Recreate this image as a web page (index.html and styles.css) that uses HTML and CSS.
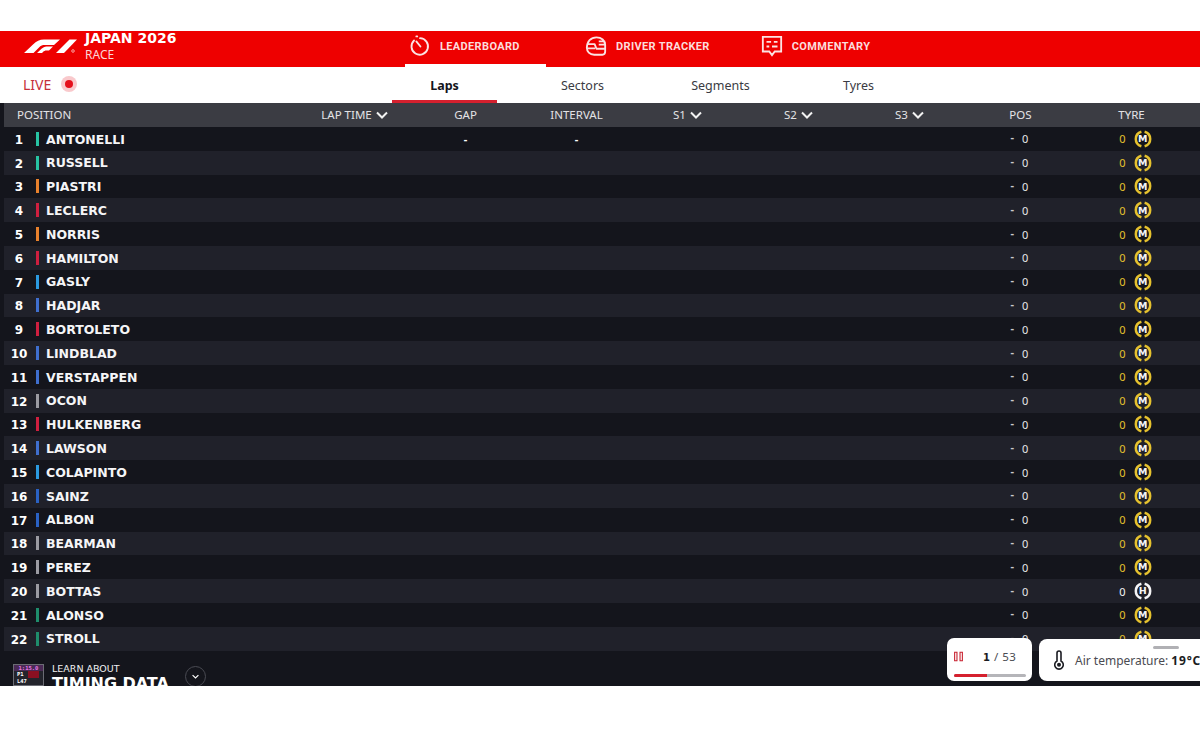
FILE: index.html
```html
<!DOCTYPE html>
<html lang="en">
<head>
<meta charset="utf-8">
<title>F1 Live Timing</title>
<link rel="stylesheet" href="styles.css">
</head>
<body>
<svg class="defs" width="0" height="0" aria-hidden="true">
  <symbol id="ring" viewBox="0 0 20 20"><path d="M8.200 1.900A8.400 8.400 0 0 0 8.200 18.100M11.800 1.900A8.400 8.400 0 0 1 11.800 18.100" fill="none" stroke="currentColor" stroke-width="2.800"/></symbol>
  <symbol id="chev" viewBox="0 0 12 8"><path d="M1 1.500 6 6.500 11 1.500" fill="none" stroke="currentColor" stroke-width="2"/></symbol>
</svg>
<div class="page">
  <header class="topbar">
    <svg class="logo" viewBox="0 0 56 15" aria-label="F1">
      <path d="M0 14 9 5.500C12.500 2.300 15.500 .5 20 .5H36L30 6H20.500C18.500 6 17 6.500 15.500 8L9.500 14Z" fill="#fff"/>
      <path d="M13 14 17.500 9.800C19 8.600 20.500 7.500 22.500 7.500H29L25 11.500H22.500C21 11.500 20 12 19 13L18 14Z" fill="#fff"/>
      <path d="M32 14 45.500 .5H53L40 14Z" fill="#fff"/>
      <circle cx="49" cy="12" r="1.300" fill="none" stroke="#fff" stroke-width=".6"/>
    </svg>
    <div class="event">
      <div class="event-name">JAPAN 2026</div>
      <div class="event-kind">RACE</div>
    </div>
    <nav class="mainnav">
      <a class="mainitem active">
        <svg class="navicon" viewBox="0 0 24 24"><path d="M12 3.500A9 9 0 1 1 5.500 6M9 1.500H8M8 7 12.500 12.500" fill="none" stroke="#fbe3e3" stroke-width="2" stroke-linecap="round"/></svg>
        <span>LEADERBOARD</span>
      </a>
      <a class="mainitem second">
        <svg class="navicon" viewBox="0 0 24 24"><path d="M2 14C2 7 6.500 2.500 12.500 2.500C18 2.500 22 6 22 11V15H12.500L10.500 10H3M2 14C2 18 5 21.500 10 21.500H19C21 21.500 22 20 22 18V15M3 14.500H11M15 7H22M15 10.500H22" fill="none" stroke="#fbe3e3" stroke-width="2" stroke-linejoin="round"/></svg>
        <span>DRIVER TRACKER</span>
      </a>
      <a class="mainitem">
        <svg class="navicon" viewBox="0 0 24 24"><path d="M2 2H22V18H15L12 22 9 18H2ZM6 7.500H11M14 7.500H18M6 12.500H9M12 12.500H18" fill="none" stroke="#fbe3e3" stroke-width="2"/></svg>
        <span>COMMENTARY</span>
      </a>
    </nav>
  </header>

  <div class="subbar">
    <div class="live"><span>LIVE</span><i class="live-dot"></i></div>
    <div class="tabs">
      <a class="tab current">Laps</a>
      <a class="tab">Sectors</a>
      <a class="tab">Segments</a>
      <a class="tab">Tyres</a>
    </div>
  </div>

  <main class="board">
    <div class="row head">
      <div class="head-pos">POSITION</div>
      <div>LAP TIME <svg class="chev"><use href="#chev"/></svg></div>
      <div>GAP</div>
      <div>INTERVAL</div>
      <div>S1 <svg class="chev"><use href="#chev"/></svg></div>
      <div>S2 <svg class="chev"><use href="#chev"/></svg></div>
      <div>S3 <svg class="chev"><use href="#chev"/></svg></div>
      <div>POS</div>
      <div>TYRE</div>
    </div>

    <div class="row"><div class="who"><span class="num">1</span><i class="bar merc"></i><span class="name">ANTONELLI</span></div><div class="cell-gap">-</div><div class="cell-int">-</div><div class="pos"><s>-</s>0</div><div class="tyre med">0<span class="ring"><svg><use href="#ring"/></svg><b>M</b></span></div></div>
    <div class="row"><div class="who"><span class="num">2</span><i class="bar merc"></i><span class="name">RUSSELL</span></div><div class="pos"><s>-</s>0</div><div class="tyre med">0<span class="ring"><svg><use href="#ring"/></svg><b>M</b></span></div></div>
    <div class="row"><div class="who"><span class="num">3</span><i class="bar mcl"></i><span class="name">PIASTRI</span></div><div class="pos"><s>-</s>0</div><div class="tyre med">0<span class="ring"><svg><use href="#ring"/></svg><b>M</b></span></div></div>
    <div class="row"><div class="who"><span class="num">4</span><i class="bar fer"></i><span class="name">LECLERC</span></div><div class="pos"><s>-</s>0</div><div class="tyre med">0<span class="ring"><svg><use href="#ring"/></svg><b>M</b></span></div></div>
    <div class="row"><div class="who"><span class="num">5</span><i class="bar mcl"></i><span class="name">NORRIS</span></div><div class="pos"><s>-</s>0</div><div class="tyre med">0<span class="ring"><svg><use href="#ring"/></svg><b>M</b></span></div></div>
    <div class="row"><div class="who"><span class="num">6</span><i class="bar fer"></i><span class="name">HAMILTON</span></div><div class="pos"><s>-</s>0</div><div class="tyre med">0<span class="ring"><svg><use href="#ring"/></svg><b>M</b></span></div></div>
    <div class="row"><div class="who"><span class="num">7</span><i class="bar alp"></i><span class="name">GASLY</span></div><div class="pos"><s>-</s>0</div><div class="tyre med">0<span class="ring"><svg><use href="#ring"/></svg><b>M</b></span></div></div>
    <div class="row"><div class="who"><span class="num">8</span><i class="bar rb"></i><span class="name">HADJAR</span></div><div class="pos"><s>-</s>0</div><div class="tyre med">0<span class="ring"><svg><use href="#ring"/></svg><b>M</b></span></div></div>
    <div class="row"><div class="who"><span class="num">9</span><i class="bar fer"></i><span class="name">BORTOLETO</span></div><div class="pos"><s>-</s>0</div><div class="tyre med">0<span class="ring"><svg><use href="#ring"/></svg><b>M</b></span></div></div>
    <div class="row"><div class="who"><span class="num">10</span><i class="bar rb"></i><span class="name">LINDBLAD</span></div><div class="pos"><s>-</s>0</div><div class="tyre med">0<span class="ring"><svg><use href="#ring"/></svg><b>M</b></span></div></div>
    <div class="row"><div class="who"><span class="num">11</span><i class="bar rb"></i><span class="name">VERSTAPPEN</span></div><div class="pos"><s>-</s>0</div><div class="tyre med">0<span class="ring"><svg><use href="#ring"/></svg><b>M</b></span></div></div>
    <div class="row"><div class="who"><span class="num">12</span><i class="bar has"></i><span class="name">OCON</span></div><div class="pos"><s>-</s>0</div><div class="tyre med">0<span class="ring"><svg><use href="#ring"/></svg><b>M</b></span></div></div>
    <div class="row"><div class="who"><span class="num">13</span><i class="bar fer"></i><span class="name">HULKENBERG</span></div><div class="pos"><s>-</s>0</div><div class="tyre med">0<span class="ring"><svg><use href="#ring"/></svg><b>M</b></span></div></div>
    <div class="row"><div class="who"><span class="num">14</span><i class="bar rb"></i><span class="name">LAWSON</span></div><div class="pos"><s>-</s>0</div><div class="tyre med">0<span class="ring"><svg><use href="#ring"/></svg><b>M</b></span></div></div>
    <div class="row"><div class="who"><span class="num">15</span><i class="bar alp"></i><span class="name">COLAPINTO</span></div><div class="pos"><s>-</s>0</div><div class="tyre med">0<span class="ring"><svg><use href="#ring"/></svg><b>M</b></span></div></div>
    <div class="row"><div class="who"><span class="num">16</span><i class="bar wil"></i><span class="name">SAINZ</span></div><div class="pos"><s>-</s>0</div><div class="tyre med">0<span class="ring"><svg><use href="#ring"/></svg><b>M</b></span></div></div>
    <div class="row"><div class="who"><span class="num">17</span><i class="bar wil"></i><span class="name">ALBON</span></div><div class="pos"><s>-</s>0</div><div class="tyre med">0<span class="ring"><svg><use href="#ring"/></svg><b>M</b></span></div></div>
    <div class="row"><div class="who"><span class="num">18</span><i class="bar has"></i><span class="name">BEARMAN</span></div><div class="pos"><s>-</s>0</div><div class="tyre med">0<span class="ring"><svg><use href="#ring"/></svg><b>M</b></span></div></div>
    <div class="row"><div class="who"><span class="num">19</span><i class="bar has"></i><span class="name">PEREZ</span></div><div class="pos"><s>-</s>0</div><div class="tyre med">0<span class="ring"><svg><use href="#ring"/></svg><b>M</b></span></div></div>
    <div class="row"><div class="who"><span class="num">20</span><i class="bar has"></i><span class="name">BOTTAS</span></div><div class="pos"><s>-</s>0</div><div class="tyre hard">0<span class="ring"><svg><use href="#ring"/></svg><b>H</b></span></div></div>
    <div class="row"><div class="who"><span class="num">21</span><i class="bar ast"></i><span class="name">ALONSO</span></div><div class="pos"><s>-</s>0</div><div class="tyre med">0<span class="ring"><svg><use href="#ring"/></svg><b>M</b></span></div></div>
    <div class="row"><div class="who"><span class="num">22</span><i class="bar ast"></i><span class="name">STROLL</span></div><div class="pos"><s>-</s>0</div><div class="tyre med">0<span class="ring"><svg><use href="#ring"/></svg><b>M</b></span></div></div>

    <div class="learn">
      <div class="learn-icon">
        <span class="li-a">1:15.0</span>
        <span class="li-b">P1</span>
        <span class="li-c">L47</span>
      </div>
      <div class="learn-text">
        <div class="learn-small">LEARN ABOUT</div>
        <div class="learn-big">TIMING DATA</div>
      </div>
      <button class="learn-btn" type="button" aria-label="Expand"><svg class="chev-small"><use href="#chev"/></svg></button>
    </div>

    <div class="float-cards">
      <div class="card lap-card">
        <div class="lap-main">
          <svg class="pause" viewBox="0 0 10 11"><path d="M.7.7H3.300V10.300H.7ZM6.700.7H9.300V10.300H6.700Z" fill="none" stroke="#c8202f" stroke-width="1.200"/></svg>
          <div class="lap-count"><b>1</b> / 53</div>
        </div>
        <div class="lap-track"><div class="lap-fill"></div></div>
      </div>
      <div class="card air-card">
        <i class="handle"></i>
        <svg class="thermo" viewBox="0 0 12 20"><path d="M4 11V3a2 2 0 0 1 4 0V11a4.300 4.300 0 1 1-4 0Z" fill="none" stroke="#1b1c22" stroke-width="1.600"/><circle cx="6" cy="14.700" r="2" fill="#1b1c22"/></svg>
        <div class="air-text">Air temperature: <b>19°C</b></div>
      </div>
    </div>
  </main>
</div>
</body>
</html>
```

FILE: styles.css
```css
* { box-sizing: border-box; }
html, body { margin: 0; height: 100%; overflow: hidden; background: #fff; }
body { font-family: "Noto Sans", "Open Sans", sans-serif; }
.defs { position: absolute; }
.page { padding-top: 31px; height: 729px; display: flex; flex-direction: column; }

.topbar {
  height: 36px; background: #ee0000; color: #fff;
  display: flex; align-items: center; padding-left: 24px; flex: none;
}
.logo { width: 56px; height: 15px; flex: none; margin-top: -5px; }
.event { margin-left: 5px; width: 91px; flex: none; height: 36px; }
.event-name { font: 700 14px/14px "DejaVu Sans", sans-serif; white-space: nowrap; }
.event-kind { font: 400 12px/16px "Noto Sans", sans-serif; color: #fbd6d6; margin-top: 2px; }
.mainnav { margin-left: 229px; display: flex; height: 36px; }
.mainitem {
  display: flex; align-items: center; gap: 9px; height: 36px;
  padding: 0 0 6px 4px; margin-right: 23px;
  font: 700 11px/1 "Roboto", sans-serif; letter-spacing: .35px; color: #fbdcdc; white-space: nowrap;
}
.mainitem.active { width: 141px; margin-right: 35px; box-shadow: inset 0 -3px 0 #fff; }
.mainitem.second { margin-right: 47px; }
.navicon { width: 22px; height: 22px; flex: none; }

.subbar { height: 36px; flex: none; display: flex; align-items: stretch; background: #fff; }
.live {
  width: 392px; padding-left: 23px; display: flex; align-items: center; gap: 14px;
  font: 400 14px/1 "Noto Sans", sans-serif; color: #c5303a;
}
.live-dot {
  width: 8px; height: 8px; border-radius: 50%; background: #e5101c;
  box-shadow: 0 0 0 4px #f9c9cc; margin-top: -2px;
}
.tabs { display: flex; gap: 33px; }
.tab {
  width: 105px; display: flex; align-items: center; justify-content: center;
  font-size: 12.500px; color: #3a3b42;
}
.tab.current { font-weight: 700; color: #14151c; box-shadow: inset 0 -3px 0 #d5202e; }

.board {
  position: relative; height: 583px; flex: none; overflow: hidden;
  background: #14151c; padding-left: 4px; color: #fff;
}
.row {
  display: grid; height: 23.800px; width: 1196px; align-items: center;
  grid-template-columns: 295px repeat(8, 111px);
  font: 400 11px/1 "Noto Sans", sans-serif; text-align: center;
}
.row:nth-of-type(odd) { background: #20212a; }
.row.head { height: 24px; background: #3b3c43; color: #e3e3e6; font-size: 11.500px; }
.head-pos { text-align: left; padding-left: 13px; }
.chev { width: 12px; height: 8px; color: #f2f2f2; margin-left: 1px; }
.who { display: flex; align-items: center; text-align: left; }
.num { width: 30px; text-align: center; font: 700 12px/1 "DejaVu Sans", sans-serif; padding-top: 2px; }
.bar { width: 3px; height: 14px; margin-left: 2px; flex: none; }
.name { margin-left: 7px; font: 700 12.500px/1 "DejaVu Sans", sans-serif; color: #f5f5f7; padding-top: 2px; }
.merc { background: #27c3a3; }
.mcl { background: #e8812c; }
.fer { background: #cf1f3f; }
.alp { background: #2b9ae0; }
.rb { background: #3f6fcf; }
.has { background: #9b9ba2; }
.wil { background: #2a62c4; }
.ast { background: #1f8d6c; }
.cell-gap { grid-column: 3; font-weight: 700; }
.cell-int { grid-column: 4; font-weight: 700; }
.pos { grid-column: 8; display: flex; justify-content: center; gap: 8px; color: #e8e8ea; transform: translateX(-1px); }
.pos s { text-decoration: none; color: #c9c9cd; margin-top: -2px; font-weight: 700; }
.tyre { grid-column: 9; display: flex; align-items: center; justify-content: center; gap: 8px; transform: translateX(4px); }
.med { color: #e6c22e; }
.hard { color: #f5f5f7; }
.ring { position: relative; width: 18px; height: 18px; flex: none; }
.ring svg { width: 18px; height: 18px; display: block; }
.ring b {
  position: absolute; inset: 0; display: flex; align-items: center; justify-content: center;
  color: #f5f5f7; font: 700 9.500px/1 "DejaVu Sans", sans-serif;
}

.learn { display: flex; align-items: flex-start; height: 36px; padding: 13px 0 0 9px; }
.learn-icon {
  width: 31px; height: 22px; background: #23242c; display: flex; flex-direction: column;
  border: 1px solid #6b6c74; font: 700 5.500px/6.500px "DejaVu Sans Mono", monospace;
  text-align: center; flex: none; overflow: hidden;
}
.li-a { color: #e878e8; background: #4a2a55; }
.li-b { color: #fff; text-align: left; padding-left: 3px; background: linear-gradient(90deg, #23242c 50%, #8a1022 50%, #8a1022 85%, #23242c 85%); }
.li-c { color: #fff; text-align: left; padding-left: 3px; }
.learn-text { margin-left: 8px; width: 124px; flex: none; }
.learn-small { font: 400 9.500px/10px "DejaVu Sans", sans-serif; color: #f0f0f2; }
.learn-big { font: 700 16px/19px "DejaVu Sans", sans-serif; white-space: nowrap; letter-spacing: -.05px; }
.learn-btn {
  width: 21px; height: 21px; padding: 0; margin: 2px 0 0 9px; flex: none;
  border-radius: 50%; border: 1px solid #4a4b53; background: #14151c;
  display: flex; align-items: center; justify-content: center; color: #fff;
}
.chev-small { width: 7px; height: 5px; }

.float-cards { position: absolute; left: 947px; top: 535px; display: flex; align-items: flex-start; gap: 7px; }
.card { background: #fff; color: #22232a; }
.lap-card { width: 85px; height: 43px; border-radius: 7px; padding: 0 6px 0 7px; }
.lap-main { display: flex; align-items: center; height: 36px; }
.pause { width: 9px; height: 11px; flex: none; }
.lap-count { margin-left: 20px; font-size: 11.500px; white-space: nowrap; color: #4a4b52; letter-spacing: .5px; }
.lap-count b { font: 700 10px/1 "DejaVu Sans", sans-serif; color: #1b1c22; }
.lap-track { height: 3px; border-radius: 2px; background: #b5b5b9; width: 72px; overflow: hidden; }
.lap-fill { width: 46%; height: 100%; background: #d5202e; }
.air-card {
  position: relative; width: 170px; height: 42px; margin-top: 1px;
  border-radius: 8px 0 0 8px; display: flex; align-items: center; padding-left: 14px;
}
.handle { position: absolute; left: 114px; top: 7px; width: 26px; height: 3px; border-radius: 2px; background: #b0b0b4; }
.thermo { width: 12px; height: 20px; flex: none; }
.air-text { margin-left: 10px; font-size: 12px; color: #4a4b52; white-space: nowrap; }
.air-text b { color: #1b1c22; letter-spacing: .8px; }
```
